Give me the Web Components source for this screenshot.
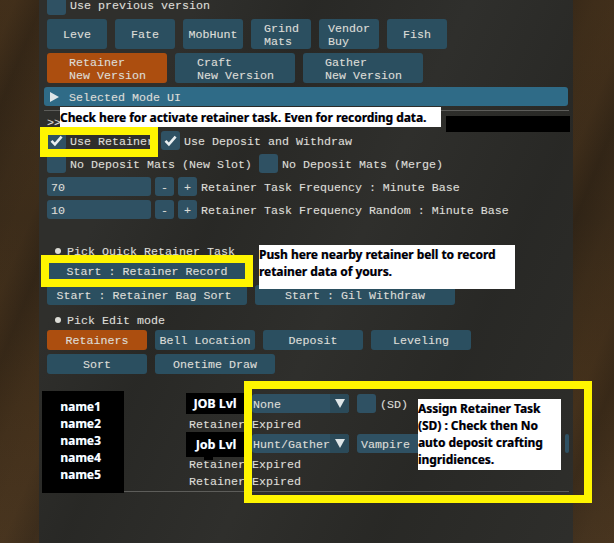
<!DOCTYPE html>
<html><head><meta charset="utf-8">
<style>
html,body{margin:0;padding:0;width:614px;height:543px;overflow:hidden;background:#3a2a18}
</style></head><body>
<ui-desk>
<ui-window>
  <ui-row style="height:15px"><ui-check style="height:15px;border-radius:0 0 3px 3px"></ui-check><ui-label style="padding:0;line-height:13px;align-self:flex-start">Use previous version</ui-label></ui-row>
  <ui-row gap="8" style="margin-top:4px;height:30px">
    <ui-btn w="60">Leve</ui-btn><ui-btn w="60">Fate</ui-btn><ui-btn w="60">MobHunt</ui-btn>
    <ui-btn w="60" two style="padding-left:13px">Grind<br>Mats</ui-btn><ui-btn w="60" two>Vendor<br>Buy</ui-btn><ui-btn w="60">Fish</ui-btn>
  </ui-row>
  <ui-row gap="8" style="margin-top:4px;height:30px">
    <ui-btn w="120" on two indent>Retainer<br>New Version</ui-btn>
    <ui-btn w="120" two indent>Craft<br>New Version</ui-btn>
    <ui-btn w="120" two indent>Gather<br>New Version</ui-btn>
  </ui-row>
  <ui-header style="margin-top:4px">Selected Mode UI</ui-header>
  <ui-sep style="margin-top:4px"></ui-sep>
  <ui-row style="margin-top:4px;height:16px"><ui-label style="padding:0">&gt;&gt;</ui-label></ui-row>
  <ui-row style="margin-top:0"><ui-check checked></ui-check><ui-label style="width:91px">Use Retainer</ui-label><ui-check checked></ui-check><ui-label>Use Deposit and Withdraw</ui-label></ui-row>
  <ui-row style="margin-top:4px"><ui-check></ui-check><ui-label style="width:189px">No Deposit Mats (New Slot)</ui-label><ui-check></ui-check><ui-label>No Deposit Mats (Merge)</ui-label></ui-row>
  <ui-stepper value="70" style="margin-top:4px">Retainer Task Frequency : Minute Base</ui-stepper>
  <ui-stepper value="10" style="margin-top:4px">Retainer Task Frequency Random : Minute Base</ui-stepper>
  <ui-bullet style="margin-top:25px">Pick Quick Retainer Task</ui-bullet>
  <ui-row style="margin-top:3px;height:20px"><ui-btn w="200">Start : Retainer Record</ui-btn></ui-row>
  <ui-row gap="8" style="margin-top:4px;height:20px"><ui-btn w="200" style="padding-right:6px">Start : Retainer Bag Sort</ui-btn><ui-btn w="200">Start : Gil Withdraw</ui-btn></ui-row>
  <ui-bullet style="margin-top:8px">Pick Edit mode</ui-bullet>
  <ui-row gap="8" style="margin-top:3px;height:20px"><ui-btn w="100" on>Retainers</ui-btn><ui-btn w="100">Bell Location</ui-btn><ui-btn w="100">Deposit</ui-btn><ui-btn w="100">Leveling</ui-btn></ui-row>
  <ui-row gap="8" style="margin-top:4px;height:20px"><ui-btn w="100">Sort</ui-btn><ui-btn w="120">Onetime Draw</ui-btn></ui-row>
  <ui-table style="margin-top:20px">
    <ui-row style="height:19px"><ui-spacer w="63"></ui-spacer><ui-combo w="97">None</ui-combo><ui-spacer w="8"></ui-spacer><ui-check></ui-check><ui-label>(SD)</ui-label></ui-row>
    <ui-row style="margin-top:4px;height:14px"><ui-label style="width:63px">Retainer</ui-label><ui-label>Expired</ui-label></ui-row>
    <ui-row style="margin-top:3px;height:19px"><ui-spacer w="63"></ui-spacer><ui-combo w="97">Hunt/Gather</ui-combo><ui-spacer w="8"></ui-spacer><ui-field w="200">Vampire</ui-field><ui-spacer w="8"></ui-spacer><ui-field w="4"></ui-field></ui-row>
    <ui-row style="margin-top:4px;height:14px"><ui-label style="width:63px">Retainer</ui-label><ui-label>Expired</ui-label></ui-row>
    <ui-row style="margin-top:3px;height:14px"><ui-label style="width:63px">Retainer</ui-label><ui-label>Expired</ui-label></ui-row>
  </ui-table>
  <ui-sep style="margin-top:3px"></ui-sep>
</ui-window>

<ui-note x="60" y="107" w="381" h="20"><span>Check here for activate retainer task. Even for recording data.</span></ui-note>
<ui-note x="259" y="245" w="256" h="44"><span style="line-height:17px;padding-top:1px;display:block">Push here nearby retainer bell to record<br>retainer data of yours.</span></ui-note>
<ui-note x="418" y="399" w="143" h="71"><span style="line-height:17px;padding-top:1px;display:block">Assign Retainer Task<br>(SD) : Check then No<br>auto deposit crafting<br>ingridiences.</span></ui-note>
<ui-note x="446" y="116" w="124" h="16" black></ui-note>
<ui-note x="42" y="391" w="82" h="102" black><span style="display:block;text-align:center;line-height:17px;padding:7px 5px 0 0;font-size:12px">name1<br>name2<br>name3<br>name4<br>name5</span></ui-note>
<ui-note x="186" y="393" w="58" h="21" black><span style="display:block;text-align:center;line-height:21px;font-size:12.4px">JOB Lvl</span></ui-note>
<ui-note x="186" y="432" w="58" h="25" black><span style="display:block;text-align:center;line-height:25px;padding-left:2px;font-size:12.4px">Job Lvl</span></ui-note>
<ui-note x="204" y="457" w="9" h="3" black></ui-note>
<ui-frame x="40" y="127" w="118" h="30" b="8"></ui-frame>
<ui-frame x="41" y="255" w="212" h="32" b="8"></ui-frame>
<ui-frame x="244" y="381" w="348" h="122" b="8"></ui-frame>
</ui-desk>

<script>
function def(name, css, html, init){
  customElements.define(name, class extends HTMLElement{
    connectedCallback(){
      if(this.shadowRoot) return;
      const r=this.attachShadow({mode:'open'});
      r.innerHTML='<style>'+css+'</style>'+html(this);
      if(init) init(this,r);
    }
  });
}
const MONO='"Liberation Mono",monospace';
def('ui-desk',`:host{display:block;position:relative;width:614px;height:543px;overflow:hidden;
  background:
   repeating-linear-gradient(112deg,rgba(85,58,28,.22) 0 14px,rgba(22,15,7,.16) 40px,rgba(75,52,26,.18) 72px,rgba(85,58,28,.22) 96px),
   linear-gradient(180deg,#3c2c1a 0,#352819 40%,#3f2e1b 75%,#443320 100%);font-family:${MONO};font-size:11.67px;color:#dcdcd6;text-shadow:0 0 1px rgba(220,220,214,.3)}`,()=>`<slot></slot>`);
def('ui-window',`:host{display:flex;flex-direction:column;box-sizing:border-box;width:534px;height:543px;margin-left:39px;padding:0 4px 0 8px;
  background:
   linear-gradient(115deg,rgba(255,255,255,.025) 0 20%,rgba(0,0,0,.04) 35%,rgba(255,255,255,.025) 55%,rgba(0,0,0,.04) 75%,rgba(255,255,255,.02) 100%),
   #2a2a27}`,()=>`<slot></slot>`);
def('ui-row',`:host{display:flex;align-items:center;height:19px;flex:none}`,e=>`<style>:host{gap:${e.getAttribute('gap')||0}px}</style><slot></slot>`);
def('ui-label',`:host{display:block;white-space:pre;line-height:14px;flex:none;padding-top:2px}`,()=>`<slot></slot>`);
def('ui-spacer',`:host{display:block;flex:none}`,e=>`<style>:host{width:${e.getAttribute('w')}px}</style>`);
def('ui-btn',`:host{display:flex;align-items:center;justify-content:center;box-sizing:border-box;height:100%;flex:none;background:#2b4f60;border-radius:3px;white-space:nowrap;line-height:13px;padding-top:2px}
 :host([on]){background:#ac4e0f}
 :host([two]){justify-content:flex-start;padding-left:9px;padding-top:4px}
 :host([indent]){padding-left:22px}`,e=>`<style>:host{width:${e.getAttribute('w')}px}</style><span><slot></slot></span>`);
def('ui-check',`:host{display:flex;align-items:center;justify-content:center;width:19px;height:19px;flex:none;background:#2f5163;border-radius:3px;margin-right:4px}
 svg{width:13px;height:13px;display:block}`,e=>e.hasAttribute('checked')?`<svg viewBox="0 0 13 13"><path d="M1.5 6.8 4.9 10.4 11.6 2.6" fill="none" stroke="#e8eef0" stroke-width="2.6"/></svg>`:'');
def('ui-header',`:host{display:flex;align-items:center;box-sizing:border-box;height:19px;margin-left:-3px;margin-right:1px;background:#2f6b87;border-radius:3px;padding-left:6px;flex:none}
 i{width:0;height:0;border-left:9px solid #dfe6e8;border-top:5px solid transparent;border-bottom:5px solid transparent;margin-right:10px}
 span{padding-top:2px}`,()=>`<i></i><span><slot></slot></span>`);
def('ui-sep',`:host{display:block;height:1px;background:#5d5d5a;margin-left:-3px;flex:none}`,()=>``);
def('ui-stepper',`:host{display:flex;align-items:center;height:19px;flex:none}
 .v,.b{background:#2f5163;border-radius:3px;height:19px;display:flex;align-items:center;box-sizing:border-box;padding-top:2px}
 .v{width:104px;padding-left:4px;margin-right:4px}
 .b{width:19px;justify-content:center;margin-right:4px}
 span{padding-top:2px}`,e=>`<div class="v">${e.getAttribute('value')}</div><div class="b">-</div><div class="b">+</div><span><slot></slot></span>`);
def('ui-bullet',`:host{display:flex;align-items:center;height:14px;flex:none;padding-left:8px}
 i{width:6px;height:6px;border-radius:50%;background:#dcdcd6;margin-right:6px;margin-left:0}
 span{padding-top:2px}`,()=>`<i></i><span><slot></slot></span>`);
def('ui-table',`:host{display:block;padding-left:142px;flex:none}`,()=>`<slot></slot>`);
def('ui-combo',`:host{display:flex;align-items:center;height:19px;box-sizing:border-box;flex:none;background:#2f5163;border-radius:3px;padding-left:1px;overflow:hidden;position:relative}
 .t{flex:1;white-space:nowrap;overflow:hidden;padding-top:2px}
 .a{width:19px;height:19px;background:#2b4a59;display:flex;align-items:center;justify-content:center;flex:none}
 .a i{width:0;height:0;border-top:9px solid #dfe6e8;border-left:5px solid transparent;border-right:5px solid transparent}`,e=>`<style>:host{width:${e.getAttribute('w')}px}</style><div class="t"><slot></slot></div><div class="a"><i></i></div>`);
def('ui-field',`:host{display:flex;align-items:center;height:19px;box-sizing:border-box;flex:none;background:#2f5163;border-radius:3px;padding:2px 0 0 4px;overflow:hidden;white-space:nowrap}`,e=>`<style>:host{width:${e.getAttribute('w')}px}</style><slot></slot>`);
def('ui-note',`:host{position:absolute;display:block;box-sizing:border-box;background:#fff;color:#000;font:700 11.9px/20px "Noto Sans",sans-serif;white-space:nowrap;overflow:hidden;text-shadow:.5px 0 0 rgba(0,70,200,.55),-.3px 0 0 rgba(230,110,0,.4)}
 :host([black]){background:#000;color:#fff;text-shadow:.5px 0 0 rgba(120,190,255,.6)}`,e=>`<style>:host{left:${e.getAttribute('x')}px;top:${e.getAttribute('y')}px;width:${e.getAttribute('w')}px;height:${e.getAttribute('h')}px}</style><slot></slot>`);
def('ui-frame',`:host{position:absolute;display:block;box-sizing:border-box;border:solid #fff500;background:transparent}`,e=>`<style>:host{left:${e.getAttribute('x')}px;top:${e.getAttribute('y')}px;width:${e.getAttribute('w')}px;height:${e.getAttribute('h')}px;border-width:${e.getAttribute('b')}px}</style>`);
</script>
</body></html>
